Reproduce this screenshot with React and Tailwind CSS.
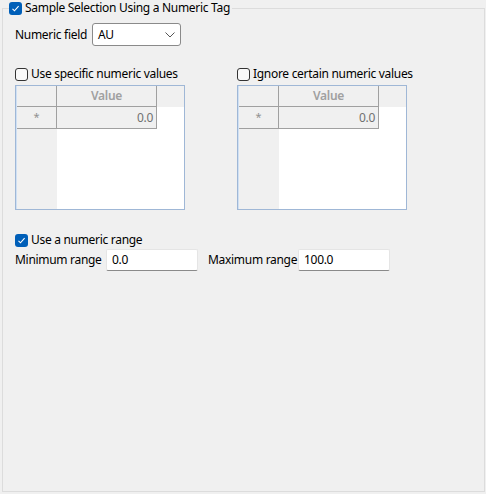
import React from 'react';

const font = { fontFamily: '"Noto Sans", "Liberation Sans", sans-serif', letterSpacing: '-0.3px' };

function Check({ checked }) {
  if (checked) {
    return (
      <span className="w-[13px] h-[13px] rounded-[3px] bg-[#005fb8] flex items-center justify-center shrink-0">
        <svg width="9" height="9" viewBox="0 0 9 9">
          <path d="M1.5 4.8 L3.5 6.8 L7.6 2.2" fill="none" stroke="#fff" strokeWidth="1.1" />
        </svg>
      </span>
    );
  }
  return <span className="w-[13px] h-[13px] rounded-[3px] border border-[#333] bg-[#f9f9f9] shrink-0" />;
}

function CheckRow({ checked, label }) {
  return (
    <div className="flex items-center gap-[3px] h-[16px] text-[12px] text-black whitespace-nowrap">
      <Check checked={checked} />
      <span className="leading-[16px]">{label}</span>
    </div>
  );
}

function ValueGrid() {
  return (
    <div className="w-[170px] h-[125px] border border-[#9fb7d6] mt-[3px]">
      <div className="grid grid-cols-[40px_100px_1fr] grid-rows-[21px_22px_1fr] h-full border-l border-[#cfe0f4] bg-white">
        <div className="bg-[#f0f0f0] border-r border-b border-[#a0a0a0]" />
        <div className="bg-[#f0f0f0] border-r border-b border-[#a0a0a0] flex items-center justify-center text-[12px] font-semibold text-[#a0a0a0]">
          Value
        </div>
        <div className="bg-[#f0f0f0]" />
        <div className="bg-[#f0f0f0] border-r border-b border-[#a0a0a0] flex items-center justify-center text-[11px] text-[#909090]">
          *
        </div>
        <div className="bg-[#f0f0f0] border-r border-b border-[#a0a0a0] flex items-center justify-end pr-[3px] text-[12px] text-[#707070]">
          0.0
        </div>
        <div />
        <div className="bg-[#f0f0f0]" />
        <div />
        <div />
      </div>
    </div>
  );
}

function TextBox({ value }) {
  return (
    <div className="w-[92px] h-[22px] bg-white border border-[#e5e5e5] border-b-[#8a8a8a] rounded-[2px] flex items-center pl-[5px] text-[12px] text-black shrink-0">
      {value}
    </div>
  );
}

export default function App() {
  return (
    <div className="w-[486px] h-[494px] bg-[#f0f0f0] pl-[2px] text-black" style={font}>
      <fieldset className="w-[483px] h-[492px] border border-[#dcdcdc]">
        <legend className="ml-[6px] pr-[2px]">
          <CheckRow checked label="Sample Selection Using a Numeric Tag" />
        </legend>

        <div className="pl-[12px]">
          <div className="flex items-center mt-[7px] text-[12px]">
            <span className="w-[77px] whitespace-nowrap">Numeric field</span>
            <div className="w-[89px] h-[23px] bg-white border border-[#8a8a8a] rounded-[3px] flex items-center justify-between pl-[5px] pr-[5px]">
              <span>AU</span>
              <svg width="10" height="6" viewBox="0 0 10 6">
                <path d="M0.5 0.5 L5 5 L9.5 0.5" fill="none" stroke="#555" strokeWidth="1" />
              </svg>
            </div>
          </div>

          <div className="flex mt-[20px]">
            <div className="w-[222px]">
              <CheckRow label="Use specific numeric values" />
              <ValueGrid />
            </div>
            <div>
              <CheckRow label="Ignore certain numeric values" />
              <ValueGrid />
            </div>
          </div>

          <div className="mt-[22px]">
            <CheckRow checked label="Use a numeric range" />
          </div>

          <div className="flex items-center mt-[1px] text-[12px] whitespace-nowrap">
            <span className="w-[91px]">Minimum range</span>
            <TextBox value="0.0" />
            <span className="ml-[10px] w-[90px]">Maximum range</span>
            <TextBox value="100.0" />
          </div>
        </div>
      </fieldset>
    </div>
  );
}
